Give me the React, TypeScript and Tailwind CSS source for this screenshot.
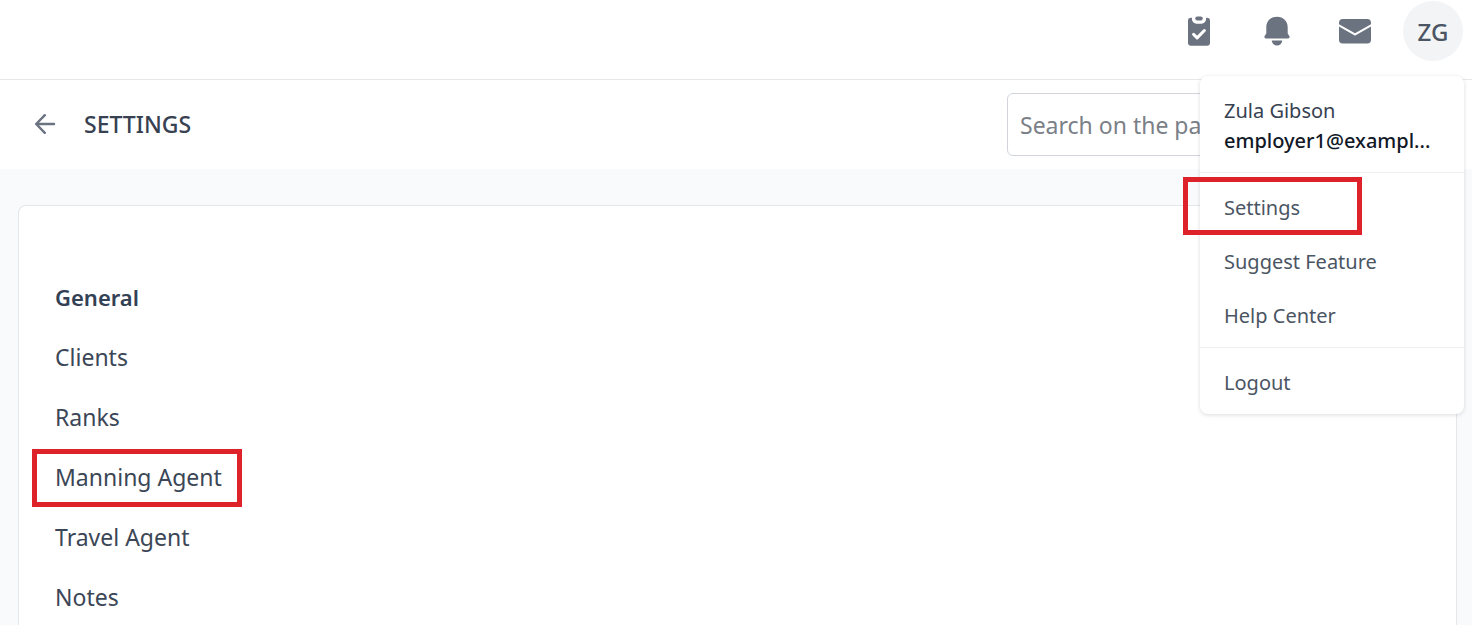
import React from "react";

const sections = ["General", "Clients", "Ranks", "Manning Agent", "Travel Agent", "Notes"];
const menuItems = ["Settings", "Suggest Feature", "Help Center"];

function TasksIcon() {
  return (
    <svg width="32" height="32" viewBox="0 0 32 32" fill="none" aria-hidden="true">
      <path
        d="M8 1.800h.9v1.300a4.600 4.600 0 0 0 4.600 4.600h5a4.600 4.600 0 0 0 4.600-4.600V1.800h.9A3 3 0 0 1 27 4.800v21.900a3 3 0 0 1-3 3H8a3 3 0 0 1-3-3V4.800a3 3 0 0 1 3-3z"
        fill="currentColor"
      />
      <rect x="12.300" y=".6" width="7.400" height="3.800" rx="1.900" fill="currentColor" />
      <path d="m10.600 18.400 3.500 3.500 7.300-7.400" stroke="#fff" strokeWidth="3" strokeLinecap="round" strokeLinejoin="round" />
    </svg>
  );
}

function BellIcon() {
  return (
    <svg width="32" height="32" viewBox="0 0 32 32" fill="currentColor" aria-hidden="true">
      <path d="M16 .7c-6.200 0-10.700 4.400-10.700 10.600v6.200L3.700 20c-.7 1.300-.2 2.400 1.300 2.400h22c1.500 0 2-1.100 1.300-2.400l-1.600-2.500v-6.200C26.700 5.100 22.200.7 16 .7z" />
      <path d="M10.700 24.400h10.600c-.5 3.200-2.500 5-5.300 5s-4.800-1.800-5.300-5z" />
    </svg>
  );
}

function MailIcon() {
  return (
    <svg width="32" height="32" viewBox="0 0 32 32" fill="currentColor" aria-hidden="true">
      <path d="M3.800 3h24.400A3.800 3.800 0 0 1 32 6.800v1.400l-16 9L0 8.200V6.800A3.800 3.800 0 0 1 3.800 3z" />
      <path d="M0 10.400v13.400a3.800 3.800 0 0 0 3.800 3.800h24.400a3.800 3.800 0 0 0 3.800-3.800V10.400l-15.300 8.800a1.400 1.400 0 0 1-1.400 0z" />
    </svg>
  );
}

function BackIcon() {
  return (
    <svg width="22" height="22" viewBox="0 0 22 22" fill="none" stroke="currentColor" strokeWidth="2.400" strokeLinecap="round" strokeLinejoin="round" aria-hidden="true">
      <path d="M20 10H2.200M10.800 1.200 2.200 10l8.600 8.800" />
    </svg>
  );
}

function IconButton({ label, children }: { label: string; children: React.ReactNode }) {
  return (
    <button type="button" aria-label={label} className="flex size-[60px] items-center justify-center pt-0.5 text-[#6b7280]">
      {children}
    </button>
  );
}

function UserMenu() {
  return (
    <div className="absolute top-[75px] -right-px z-10 w-[264px] rounded-lg bg-white text-xl text-[#4b5563] shadow-[0_1px_4px_rgba(0,0,0,0.14)]">
      <div className="border-b border-[#eef0f2] px-6 pt-5 pb-4 leading-[30px]">
        <div className="text-[#374151]">Zula Gibson</div>
        <div className="font-medium text-[#111827]">employer1@exampl...</div>
      </div>
      <nav className="border-b border-[#eef0f2] pt-2 pb-1">
        {menuItems.map((item) => (
          <a key={item} href="#" className="relative flex h-[54px] items-center px-6">
            {item}
            {item === "Settings" && (
              <span className="absolute -top-1 bottom-0 -left-[17px] w-[179px] border-5 border-[#dd222a]" />
            )}
          </a>
        ))}
      </nav>
      <div className="pt-2 pb-1">
        <button type="button" className="flex h-[54px] w-full items-center px-6">
          Logout
        </button>
      </div>
    </div>
  );
}

export default function App() {
  return (
    <div className="flex min-h-screen flex-col bg-[#f9fafc] font-['Noto_Sans',sans-serif] text-[#374151]">
      <header className="flex h-20 items-start justify-end gap-[18px] border-b border-[#e5e7eb] bg-white pt-px pr-[9px]">
        <IconButton label="Tasks">
          <TasksIcon />
        </IconButton>
        <IconButton label="Notifications">
          <BellIcon />
        </IconButton>
        <IconButton label="Messages">
          <MailIcon />
        </IconButton>
        <div className="relative">
          <button type="button" aria-label="Account" className="flex size-[60px] items-center justify-center rounded-full bg-[#f3f4f6] pt-0.5 text-2xl font-medium text-[#4b5563]">
            ZG
          </button>
          <UserMenu />
        </div>
      </header>

      <div className="flex items-center justify-between bg-white py-[13px] pr-4 pl-[34px]">
        <div className="flex items-center gap-7">
          <button type="button" aria-label="Back" className="text-[#6b7280]">
            <BackIcon />
          </button>
          <h1 className="text-[23px] font-medium text-[#374151]">SETTINGS</h1>
        </div>
        <input
          type="search"
          aria-label="Search on the page"
          placeholder="Search on the page"
          className="h-[63px] w-[449px] rounded-md border border-[#d1d5db] bg-white px-3 text-[23px] placeholder:text-[#7b8087]"
        />
      </div>

      <main className="flex grow flex-col pt-9 pr-[15px] pl-[18px]">
        <nav className="flex grow flex-col items-start rounded-t-lg border border-b-0 border-[#e5e7eb] bg-white px-9 pt-[61px]">
          {sections.map((name) => (
            <a
              key={name}
              href="#"
              className={
                name === "General"
                  ? "relative flex h-[60px] items-center text-[22px] font-semibold text-[#334155]"
                  : "relative flex h-[60px] items-center text-[23px] text-[#3b4656]"
              }
            >
              {name}
              {name === "Manning Agent" && (
                <span className="absolute top-0.5 bottom-0 -left-[23px] w-[210px] border-5 border-[#dd222a]" />
              )}
            </a>
          ))}
        </nav>
      </main>
    </div>
  );
}
